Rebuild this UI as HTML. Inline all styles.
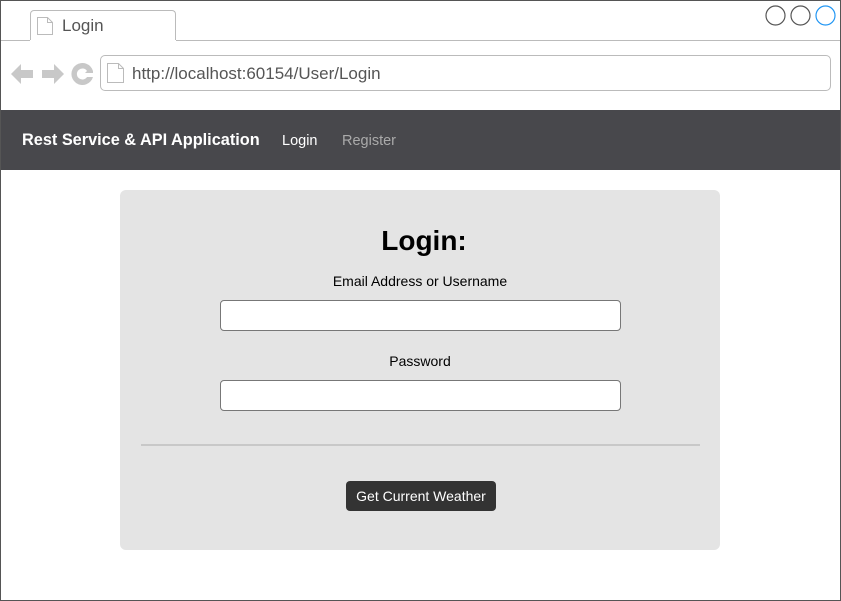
<!DOCTYPE html>
<html><head><style>
*{margin:0;padding:0;box-sizing:border-box}
body{width:841px;height:601px;position:relative;font-family:"Liberation Sans",sans-serif;background:#fff;overflow:hidden}
.frame{position:absolute;left:0;top:0;width:841px;height:601px;border:1px solid #555}
.abs{position:absolute}
</style></head><body>
<div class="frame"></div>
<div class="abs" style="left:30px;top:10px;width:146px;height:31px;border:1px solid #bbb;border-bottom:none;border-radius:4px 4px 0 0;background:#fff"></div>
<div class="abs" style="left:1px;top:40px;width:839px;height:1px;background:#bbb"></div>
<div class="abs" style="left:30px;top:40px;width:146px;height:1px;background:#fff"></div>
<svg class="abs" style="left:36px;top:16px" width="18" height="20"><path d="M1.5 1.5h10l5 5v12h-15z M11.5 1.5v5h5" fill="#fff" stroke="#bbb"/></svg>
<div class="abs" style="left:62px;top:16px;font-size:17px;color:#555">Login</div>
<svg class="abs" style="left:765px;top:5px" width="72" height="22"><circle cx="10.5" cy="10.5" r="9.5" fill="none" stroke="#555" stroke-width="1.2"/><circle cx="35.5" cy="10.5" r="9.5" fill="none" stroke="#555" stroke-width="1.2"/><circle cx="60.5" cy="10.5" r="9.5" fill="none" stroke="#2196f3" stroke-width="1.2"/></svg>
<svg class="abs" style="left:10px;top:62px" width="90" height="24"><path d="M1 12l10-10v6h12v8h-12v6z" fill="#c8c8c8"/><path d="M54 12l-10-10v6h-12v8h12v6z" fill="#c8c8c8"/><path d="M83 9a11 11 0 1 0 0 6h-6a5.5 5.5 0 1 1 0-6l-2 2h8v-9z" fill="#c8c8c8"/></svg>
<div class="abs" style="left:100px;top:55px;width:731px;height:36px;border:1px solid #bbb;border-radius:5px"></div>
<svg class="abs" style="left:106px;top:62px" width="20" height="22"><path d="M1.5 1.5h11l5 5v14h-16z M12.5 1.5v5h5" fill="#fff" stroke="#bbb"/></svg>
<div class="abs" style="left:132px;top:64px;font-size:17px;color:#555">http://localhost:60154/User/Login</div>
<div class="abs" style="left:1px;top:110px;width:839px;height:60px;background:#48484c"></div>
<div class="abs" style="left:22px;top:131px;font-size:16.3px;font-weight:bold;color:#fff">Rest Service &amp; API Application</div>
<div class="abs" style="left:282px;top:133px;font-size:14.5px;color:#fff">Login</div>
<div class="abs" style="left:342px;top:133px;font-size:14.5px;color:#aaa">Register</div>
<div class="abs" style="left:120px;top:190px;width:600px;height:360px;background:#e4e4e4;border-radius:6px"></div>
<div class="abs" style="left:124px;top:225px;width:600px;text-align:center;font-size:28px;font-weight:bold;color:#000">Login:</div>
<div class="abs" style="left:120px;top:273px;width:600px;text-align:center;font-size:14px;color:#000">Email Address or Username</div>
<div class="abs" style="left:220px;top:300px;width:401px;height:31px;background:#fff;border:1px solid #777;border-radius:4px"></div>
<div class="abs" style="left:120px;top:353px;width:600px;text-align:center;font-size:14px;color:#000">Password</div>
<div class="abs" style="left:220px;top:380px;width:401px;height:31px;background:#fff;border:1px solid #777;border-radius:4px"></div>
<div class="abs" style="left:141px;top:444px;width:559px;height:2px;background:#c8c8c8"></div>
<div class="abs" style="left:346px;top:481px;width:150px;height:30px;background:#333;border-radius:4px;color:#fff;font-size:14px;text-align:center;line-height:30px">Get Current Weather</div>
</body></html>
